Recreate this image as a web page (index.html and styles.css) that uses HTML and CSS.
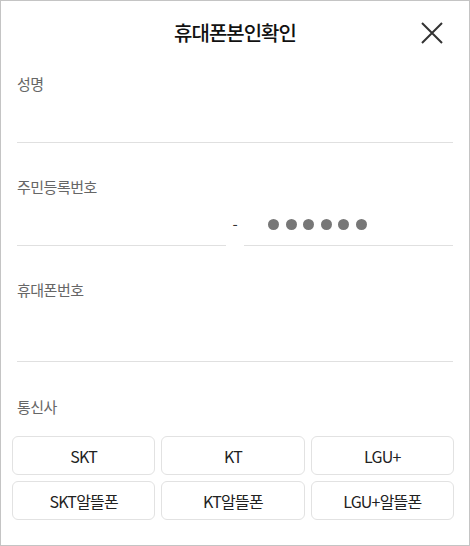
FILE: index.html
```html
<!DOCTYPE html>
<html lang="ko">
<head>
  <meta charset="UTF-8" />
  <meta name="viewport" content="width=device-width, initial-scale=1.0"/>
  <title>휴대폰본인확인</title>
  <link rel="stylesheet" href="styles.css">
</head>
<body>
  <div class="popup">
    <div class="header">
      <h2>휴대폰본인확인</h2>
      <button class="close" aria-label="닫기">
        <svg width="22" height="22" viewBox="0 0 22 22">
          <path d="M1 1 L21 21 M21 1 L1 21" stroke="#333" stroke-width="2" fill="none"/>
        </svg>
      </button>
    </div>

    <div class="form">
      <div class="field first">
        <label for="name">성명</label>
        <input type="text" id="name">
      </div>

      <div class="field">
        <label for="jumin1">주민등록번호</label>
        <div class="jumin">
          <input type="text" id="jumin1">
          <span class="dash">-</span>
          <div class="masked">
            <span class="dot"></span><span class="dot"></span><span class="dot"></span>
            <span class="dot"></span><span class="dot"></span><span class="dot"></span>
          </div>
        </div>
      </div>

      <div class="field">
        <label for="phone">휴대폰번호</label>
        <input type="tel" id="phone" class="tall">
      </div>

      <div class="field carrier">
        <label>통신사</label>
      </div>
    </div>

    <div class="carriers">
      <button>SKT</button>
      <button>KT</button>
      <button>LGU+</button>
      <button>SKT알뜰폰</button>
      <button>KT알뜰폰</button>
      <button>LGU+알뜰폰</button>
    </div>
  </div>
</body>
</html>
```

FILE: styles.css
```css
body {
  margin: 0;
  background: #fff;
  font-family: 'Noto Sans CJK KR', 'Noto Sans', sans-serif;
}
.popup {
  box-sizing: border-box;
  width: 470px;
  height: 546px;
  border: 1px solid #c4c4c4;
  background: #fff;
}
.header {
  position: relative;
  height: 63px;
  display: flex;
  align-items: center;
  justify-content: center;
}
.header h2 {
  margin: 0;
  font-size: 20px;
  font-weight: 500;
  letter-spacing: -1px;
  color: #111;
  line-height: 1;
}
.close {
  position: absolute;
  right: 26px;
  top: 21px;
  padding: 0;
  border: none;
  background: none;
  line-height: 0;
  cursor: pointer;
}
.form {
  padding: 0 16px;
}
.field {
  margin-top: 34px;
}
.field.first {
  margin-top: 10px;
}
.field.carrier {
  margin-top: 35px;
}
label {
  display: block;
  height: 20px;
  line-height: 20px;
  font-size: 15px;
  letter-spacing: -0.5px;
  color: #666;
}
input {
  display: block;
  box-sizing: border-box;
  width: 100%;
  height: 49px;
  margin: 0;
  padding: 0;
  border: none;
  border-bottom: 1px solid #e0e0e0;
  outline: none;
  background: transparent;
}
input.tall {
  height: 62px;
}
.jumin {
  display: grid;
  grid-template-columns: 1fr 18px 1fr;
}
.jumin input {
  width: 100%;
  min-width: 0;
}
.dash {
  padding-top: 6px;
  display: flex;
  align-items: center;
  justify-content: center;
  font-size: 15px;
  color: #333;
}
.masked {
  box-sizing: border-box;
  height: 49px;
  padding: 6px 0 0 24px;
  display: flex;
  align-items: center;
  gap: 6.6px;
  border-bottom: 1px solid #e0e0e0;
}
.dot {
  width: 11px;
  height: 11px;
  border-radius: 50%;
  background: #777;
}
.carriers {
  display: grid;
  grid-template-columns: repeat(3, 1fr);
  gap: 6px 6px;
  padding: 19px 15px 0 11px;
}
.carriers button {
  height: 39px;
  padding: 0;
  border: 1px solid #e2e2e2;
  border-radius: 6px;
  background: #fff;
  font-family: 'Noto Sans CJK KR', 'Noto Sans', sans-serif;
  font-size: 16px;
  letter-spacing: -0.8px;
  color: #222;
  cursor: pointer;
}
```
